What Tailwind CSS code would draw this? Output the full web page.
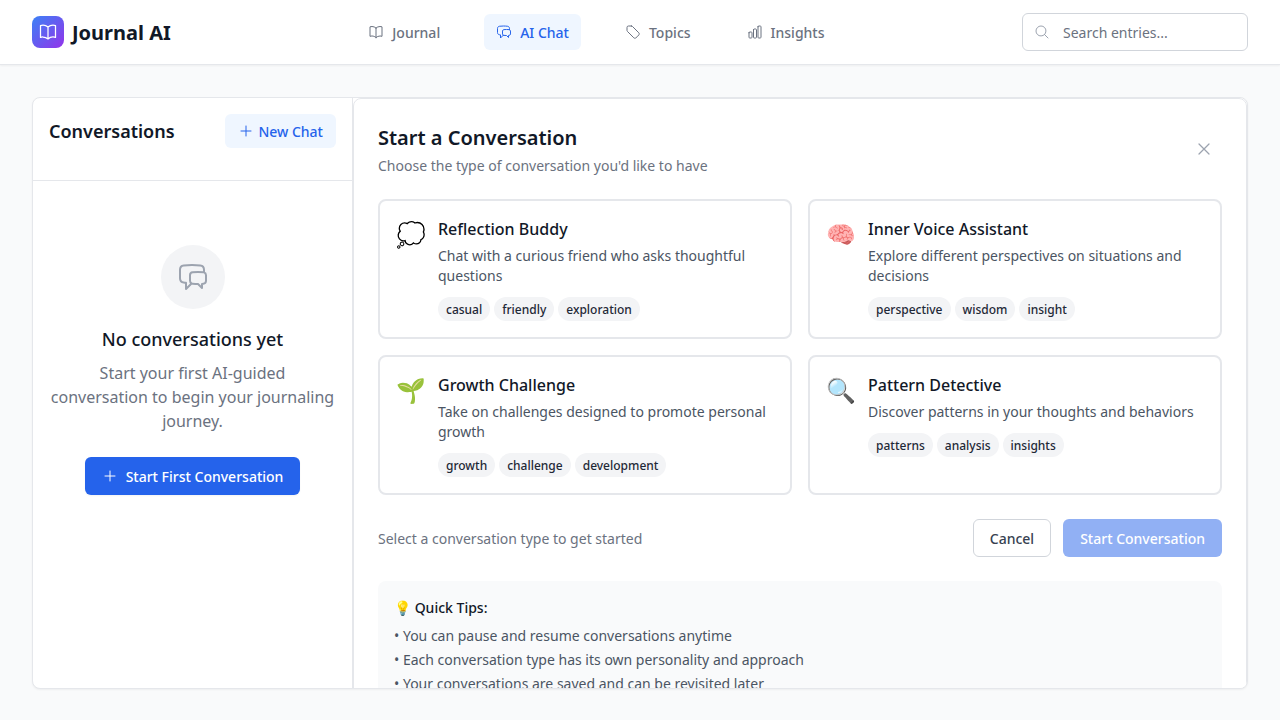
<!DOCTYPE html>
<html lang="en">
<head>
<meta charset="utf-8">
<title>Journal AI</title>
<script src="https://cdn.jsdelivr.net/npm/@tailwindcss/browser@4"></script>
</head>
<body class="h-screen overflow-hidden bg-[#f9fafb] font-['Noto_Sans',sans-serif] text-[#111827]">
<svg class="hidden" xmlns="http://www.w3.org/2000/svg">
  <symbol id="book" viewBox="0 0 24 24"><path stroke-linecap="round" stroke-linejoin="round" d="M12 6.042A8.967 8.967 0 0 0 6 3.75c-1.052 0-2.062.18-3 .512v14.25A8.987 8.987 0 0 1 6 18c2.305 0 4.408.867 6 2.292m0-14.25a8.966 8.966 0 0 1 6-2.292c1.052 0 2.062.18 3 .512v14.25A8.987 8.987 0 0 0 18 18a8.967 8.967 0 0 0-6 2.292m0-14.25v14.25"/></symbol>
  <symbol id="chat" viewBox="0 0 24 24"><path stroke-linecap="round" stroke-linejoin="round" d="M20.25 8.511c.884.284 1.5 1.128 1.5 2.097v4.286c0 1.136-.847 2.1-1.98 2.193-.34.027-.68.052-1.02.072v3.091l-3-3c-1.354 0-2.694-.055-4.02-.163a2.115 2.115 0 0 1-.825-.242m9.345-8.334a2.126 2.126 0 0 0-.476-.095 48.64 48.64 0 0 0-8.048 0c-1.131.094-1.976 1.057-1.976 2.192v4.286c0 .837.46 1.58 1.155 1.951m9.345-8.334V6.637c0-1.621-1.152-3.026-2.76-3.235A48.455 48.455 0 0 0 11.25 3c-2.115 0-4.198.137-6.24.402-1.608.209-2.76 1.614-2.76 3.235v6.226c0 1.621 1.152 3.026 2.76 3.235.577.075 1.157.14 1.74.194V21l4.155-4.155"/></symbol>
  <symbol id="tag" viewBox="0 0 24 24"><path stroke-linecap="round" stroke-linejoin="round" d="M9.568 3H5.25A2.25 2.25 0 0 0 3 5.25v4.318c0 .597.237 1.17.659 1.591l9.581 9.581c.699.699 1.78.872 2.607.33a18.095 18.095 0 0 0 5.223-5.223c.542-.827.369-1.908-.33-2.607L11.16 3.66A2.25 2.25 0 0 0 9.568 3Z"/></symbol>
  <symbol id="chart" viewBox="0 0 24 24"><path stroke-linecap="round" stroke-linejoin="round" d="M3 13.125C3 12.504 3.504 12 4.125 12h2.25c.621 0 1.125.504 1.125 1.125v6.75C7.5 20.496 6.996 21 6.375 21h-2.25A1.125 1.125 0 0 1 3 19.875v-6.75ZM9.75 8.625c0-.621.504-1.125 1.125-1.125h2.25c.621 0 1.125.504 1.125 1.125v11.25c0 .621-.504 1.125-1.125 1.125h-2.25a1.125 1.125 0 0 1-1.125-1.125V8.625ZM16.5 4.125c0-.621.504-1.125 1.125-1.125h2.25C20.496 3 21 3.504 21 4.125v15.75c0 .621-.504 1.125-1.125 1.125h-2.25a1.125 1.125 0 0 1-1.125-1.125V4.125Z"/></symbol>
  <symbol id="search" viewBox="0 0 24 24"><path stroke-linecap="round" stroke-linejoin="round" d="m21 21-5.197-5.197m0 0A7.5 7.5 0 1 0 5.196 5.196a7.5 7.5 0 0 0 10.607 10.607Z"/></symbol>
  <symbol id="plus" viewBox="0 0 24 24"><path stroke-linecap="round" stroke-linejoin="round" d="M12 4.5v15m7.5-7.5h-15"/></symbol>
  <symbol id="close" viewBox="0 0 24 24"><path stroke-linecap="round" stroke-linejoin="round" d="M6 18 18 6M6 6l12 12"/></symbol>
</svg>

<header class="border-b border-[#e5e7eb] bg-white shadow-[0_1px_2px_0_rgb(0_0_0/0.05)]">
  <div class="flex h-16 items-center justify-between px-8">
    <div class="flex items-center gap-2">
      <div class="flex size-8 items-center justify-center rounded-lg bg-[linear-gradient(to_bottom_right,#3b82f6,#9333ea)] text-white">
        <svg class="size-5 fill-none stroke-current stroke-[1.5]"><use href="#book"/></svg>
      </div>
      <span class="-mb-px pt-px text-xl/7 font-bold">Journal AI</span>
    </div>
    <nav class="flex gap-8 text-sm/5 font-medium text-[#6b7280]">
      <a class="flex items-center gap-2 rounded-md px-3 py-2"><svg class="size-4 fill-none stroke-current stroke-[1.5]"><use href="#book"/></svg><span class="-mb-px pt-px">Journal</span></a>
      <a class="flex items-center gap-2 rounded-md bg-[#eff6ff] px-3 py-2 text-[#2563eb]"><svg class="size-4 fill-none stroke-current stroke-[1.5]"><use href="#chat"/></svg><span class="-mb-px pt-px">AI Chat</span></a>
      <a class="flex items-center gap-2 rounded-md px-3 py-2"><svg class="size-4 fill-none stroke-current stroke-[1.5]"><use href="#tag"/></svg><span class="-mb-px pt-px">Topics</span></a>
      <a class="flex items-center gap-2 rounded-md px-3 py-2"><svg class="size-4 fill-none stroke-current stroke-[1.5]"><use href="#chart"/></svg><span class="-mb-px pt-px">Insights</span></a>
    </nav>
    <div class="relative">
      <svg class="absolute top-[11px] left-3 size-4 fill-none stroke-[#9ca3af] stroke-[1.5]"><use href="#search"/></svg>
      <input type="text" placeholder="Search entries..." class="block h-[38px] w-[226px] rounded-md border border-[#d1d5db] bg-white py-2 pr-4 pl-10 text-sm/5 placeholder:text-[#6b7280]">
    </div>
  </div>
</header>

<main class="p-8">
  <div class="flex h-[calc(100vh-8rem)] overflow-hidden rounded-lg border border-[#e5e7eb] bg-white shadow-[0_1px_2px_0_rgb(0_0_0/0.05)]">
    <aside class="w-80 shrink-0 border-r border-[#e5e7eb]">
      <div class="border-b border-[#e5e7eb] p-4">
        <div class="mb-4 flex items-center justify-between">
          <h2 class="text-lg/7 font-semibold">Conversations</h2>
          <button class="flex items-center gap-1 rounded-md border border-transparent bg-[#eff6ff] px-3 py-1.5 text-sm/5 font-medium text-[#2563eb]"><svg class="size-4 fill-none stroke-current stroke-[1.5]"><use href="#plus"/></svg><span class="-mb-px pt-px">New Chat</span></button>
        </div>
      </div>
      <div class="flex flex-col items-center px-4 py-16 text-center">
        <div class="mb-4 flex size-16 items-center justify-center rounded-full bg-[#f3f4f6]">
          <svg class="size-8 fill-none stroke-[#9ca3af] stroke-[1.5]"><use href="#chat"/></svg>
        </div>
        <h3 class="mb-2 text-lg/7 font-medium">No conversations yet</h3>
        <p class="mb-6 text-[#6b7280]">Start your first AI-guided conversation to begin your journaling journey.</p>
        <button class="flex items-center gap-2 rounded-md border border-transparent bg-[#2563eb] px-4 py-2 text-sm/5 font-medium text-white shadow-[0_1px_2px_0_rgb(0_0_0/0.05)]"><svg class="size-4 fill-none stroke-current stroke-[1.5]"><use href="#plus"/></svg><span class="-mb-px pt-px">Start First Conversation</span></button>
      </div>
    </aside>

    <section class="min-w-0 flex-1">
      <div class="rounded-lg border border-[#e5e7eb] bg-white p-6">
        <div class="mb-6 flex items-center justify-between">
          <div class="-mb-px pt-px">
            <h2 class="text-xl/7 font-semibold">Start a Conversation</h2>
            <p class="mt-1 text-sm/5 text-[#6b7280]">Choose the type of conversation you'd like to have</p>
          </div>
          <button class="p-2 text-[#9ca3af]"><svg class="size-5 fill-none stroke-current stroke-[1.5]"><use href="#close"/></svg></button>
        </div>

        <div class="grid grid-cols-2 gap-4">
          <div class="flex items-start gap-3 rounded-lg border-2 border-[#e5e7eb] p-4">
            <div class="-mb-px pt-px text-2xl/8">💭</div>
            <div class="flex-1">
              <h3 class="mb-1 font-medium">Reflection Buddy</h3>
              <p class="mb-[11px] pt-px text-sm/5 text-[#4b5563]">Chat with a curious friend who asks thoughtful questions</p>
              <div class="flex gap-1 text-xs/4 font-medium text-[#1f2937]"><span class="rounded-full bg-[#f3f4f6] px-2 pt-[5px] pb-[3px]">casual</span><span class="rounded-full bg-[#f3f4f6] px-2 pt-[5px] pb-[3px]">friendly</span><span class="rounded-full bg-[#f3f4f6] px-2 pt-[5px] pb-[3px]">exploration</span></div>
            </div>
          </div>
          <div class="flex items-start gap-3 rounded-lg border-2 border-[#e5e7eb] p-4">
            <div class="-mb-px pt-px text-2xl/8">🧠</div>
            <div class="flex-1">
              <h3 class="mb-1 font-medium">Inner Voice Assistant</h3>
              <p class="mb-[11px] pt-px text-sm/5 text-[#4b5563]">Explore different perspectives on situations and decisions</p>
              <div class="flex gap-1 text-xs/4 font-medium text-[#1f2937]"><span class="rounded-full bg-[#f3f4f6] px-2 pt-[5px] pb-[3px]">perspective</span><span class="rounded-full bg-[#f3f4f6] px-2 pt-[5px] pb-[3px]">wisdom</span><span class="rounded-full bg-[#f3f4f6] px-2 pt-[5px] pb-[3px]">insight</span></div>
            </div>
          </div>
          <div class="flex items-start gap-3 rounded-lg border-2 border-[#e5e7eb] p-4">
            <div class="-mb-px pt-px text-2xl/8">🌱</div>
            <div class="flex-1">
              <h3 class="mb-1 font-medium">Growth Challenge</h3>
              <p class="mb-[11px] pt-px text-sm/5 text-[#4b5563]">Take on challenges designed to promote personal growth</p>
              <div class="flex gap-1 text-xs/4 font-medium text-[#1f2937]"><span class="rounded-full bg-[#f3f4f6] px-2 pt-[5px] pb-[3px]">growth</span><span class="rounded-full bg-[#f3f4f6] px-2 pt-[5px] pb-[3px]">challenge</span><span class="rounded-full bg-[#f3f4f6] px-2 pt-[5px] pb-[3px]">development</span></div>
            </div>
          </div>
          <div class="flex items-start gap-3 rounded-lg border-2 border-[#e5e7eb] p-4">
            <div class="-mb-px pt-px text-2xl/8">🔍</div>
            <div class="flex-1">
              <h3 class="mb-1 font-medium">Pattern Detective</h3>
              <p class="mb-[11px] pt-px text-sm/5 text-[#4b5563]">Discover patterns in your thoughts and behaviors</p>
              <div class="flex gap-1 text-xs/4 font-medium text-[#1f2937]"><span class="rounded-full bg-[#f3f4f6] px-2 pt-[5px] pb-[3px]">patterns</span><span class="rounded-full bg-[#f3f4f6] px-2 pt-[5px] pb-[3px]">analysis</span><span class="rounded-full bg-[#f3f4f6] px-2 pt-[5px] pb-[3px]">insights</span></div>
            </div>
          </div>
        </div>

        <div class="mt-6 flex items-center justify-between text-sm/5">
          <p class="-mb-px pt-px text-[#6b7280]">Select a conversation type to get started</p>
          <div class="flex gap-3 font-medium">
            <button class="rounded-md border border-[#d1d5db] bg-white px-4 pt-[9px] pb-[7px] text-[#374151]">Cancel</button>
            <button disabled class="rounded-md border border-transparent bg-[#2563eb] px-4 pt-[9px] pb-[7px] text-white opacity-50">Start Conversation</button>
          </div>
        </div>

        <div class="mt-6 rounded-lg bg-[#f9fafb] px-4 pt-[17px] pb-[15px] text-sm/5">
          <h4 class="mb-2 font-medium">💡 Quick Tips:</h4>
          <ul class="space-y-1 text-[#4b5563]">
            <li>• You can pause and resume conversations anytime</li>
            <li>• Each conversation type has its own personality and approach</li>
            <li>• Your conversations are saved and can be revisited later</li>
          </ul>
        </div>
      </div>
    </section>
  </div>
</main>
</body>
</html>
